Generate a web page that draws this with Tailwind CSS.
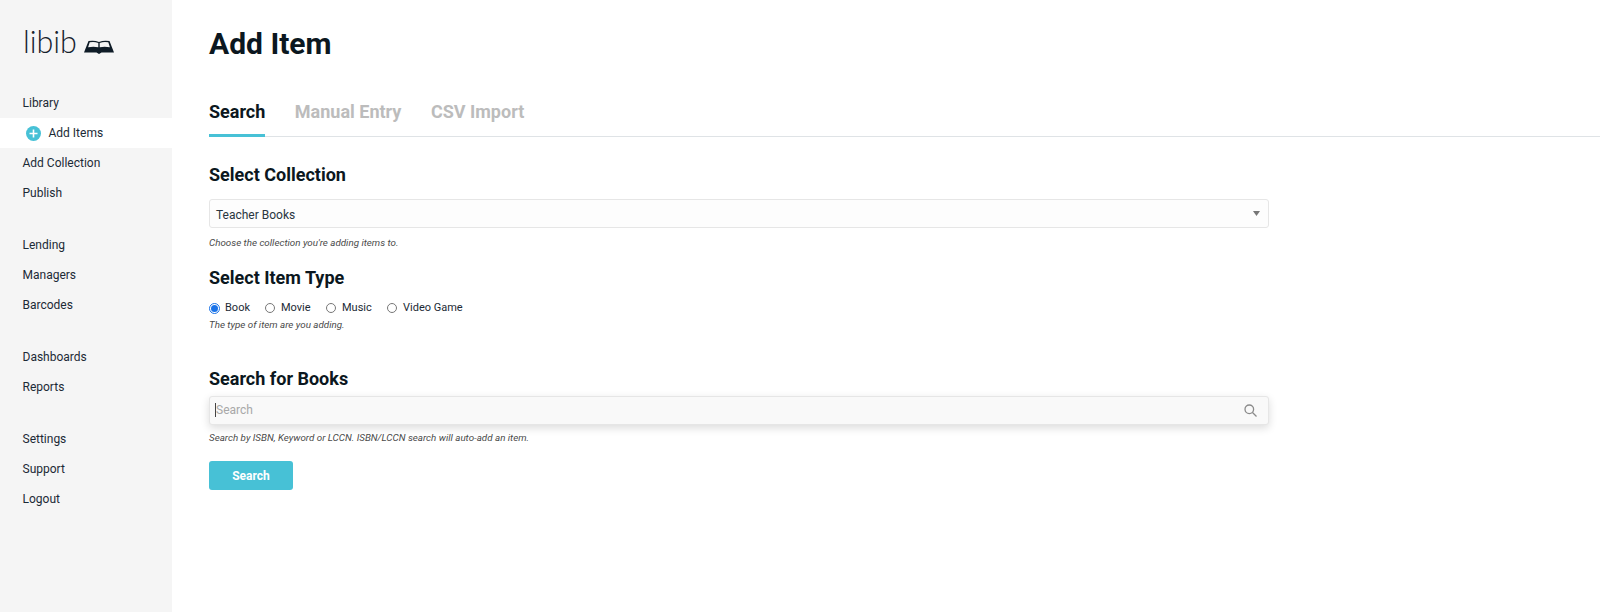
<!DOCTYPE html>
<html>
<head>
<meta charset="utf-8">
<script src="https://cdn.jsdelivr.net/npm/@tailwindcss/browser@4"></script>
</head>
<body class="bg-white font-['Roboto',sans-serif] text-[#0b1720] overflow-hidden">
<div class="flex h-[612px] w-[1600px]">
  <aside class="w-[172px] shrink-0 bg-[#f5f5f5] flex flex-col">
    <div class="flex items-end pl-[23px] pt-[26px] h-[88px] pb-[32px] gap-[6px]">
      <span class="font-['Lato',sans-serif] font-light text-[30.5px] leading-[29px] text-[#15222d]">libib</span>
      <svg class="mb-[2px]" width="32" height="14" viewBox="0 0 31 14"><path d="M0.5 12.5 L5 1 Q11 0 15.5 2 Q20 0 26 1 L30.5 12.5 L18 12.5 L15.5 14 L13 12.5 Z" fill="#0f1c27"/><path d="M6.2 2.3 Q11 1.4 14.8 3 L14.8 7.2 Q10 6.2 4.6 7.2 Z M16.2 3 Q20 1.4 24.8 2.3 L26.4 7.2 Q21 6.2 16.2 7.2 Z" fill="#f5f5f5"/></svg>
    </div>
    <nav class="text-[12px] text-[#1c2a35] leading-[30px]">
      <div class="pl-[22.5px] h-[30px]">Library</div>
      <div class="h-[30px] bg-white flex items-center pl-[26px] gap-[7.5px]">
        <svg width="15" height="15" viewBox="0 0 15 15"><circle cx="7.5" cy="7.5" r="7.5" fill="#47c1d6"/><path d="M7.5 3.5v8M3.5 7.5h8" stroke="#fff" stroke-width="1.6"/></svg>
        <span>Add Items</span>
      </div>
      <div class="pl-[22.5px] h-[30px]">Add Collection</div>
      <div class="pl-[22.5px] h-[30px]">Publish</div>
      <div class="pl-[22.5px] h-[30px] mt-[22px]">Lending</div>
      <div class="pl-[22.5px] h-[30px]">Managers</div>
      <div class="pl-[22.5px] h-[30px]">Barcodes</div>
      <div class="pl-[22.5px] h-[30px] mt-[22px]">Dashboards</div>
      <div class="pl-[22.5px] h-[30px]">Reports</div>
      <div class="pl-[22.5px] h-[30px] mt-[22px]">Settings</div>
      <div class="pl-[22.5px] h-[30px]">Support</div>
      <div class="pl-[22.5px] h-[30px]">Logout</div>
    </nav>
  </aside>
  <main class="flex-1 min-w-0">
    <h1 class="pl-[37px] pt-[26px] text-[30px] font-bold leading-[36px] h-[62px]">Add Item</h1>
    <div class="mt-[30px] ml-[37px] flex gap-[29.5px] border-b border-[#dfe3e6] h-[45px] text-[18px] font-bold">
      <div class="h-[45px] border-b-[3px] border-[#47c1d6] leading-[39px]">Search</div>
      <div class="text-[#bcbcbc] leading-[39px]">Manual Entry</div>
      <div class="text-[#bcbcbc] leading-[39px]">CSV Import</div>
    </div>
    <div class="ml-[37px] w-[1060px]">
      <h2 class="mt-[27px] text-[18px] font-bold leading-[22px]">Select Collection</h2>
      <div class="mt-[13px] h-[29px] rounded-[3px] border border-[#e6e6e6] bg-[#fdfdfd] flex items-center justify-between pl-[6px] pr-[8px] pt-[2px] text-[12px] text-[#2a3640]">
        <span>Teacher Books</span>
        <svg class="mb-[2px]" width="7" height="5" viewBox="0 0 7 5"><path d="M0 0h7L3.5 5z" fill="#777"/></svg>
      </div>
      <p class="mt-[8px] text-[9.8px] italic text-[#4a4a4a] leading-[14px]">Choose the collection you're adding items to.</p>
      <h2 class="mt-[17px] text-[18px] font-bold leading-[22px]">Select Item Type</h2>
      <div class="mt-[11px] flex items-center text-[11px] text-[#1c2a35] leading-[16px]">
        <span class="w-[11px] h-[11px] rounded-full border border-[#1a73e8] flex items-center justify-center"><span class="w-[7px] h-[7px] rounded-full bg-[#1a73e8]"></span></span>
        <span class="ml-[5px] w-[25px]">Book</span>
        <span class="ml-[15px] w-[10px] h-[10px] rounded-full border border-[#777]"></span>
        <span class="ml-[6px] w-[30px]">Movie</span>
        <span class="ml-[15px] w-[10px] h-[10px] rounded-full border border-[#777]"></span>
        <span class="ml-[6px] w-[30px]">Music</span>
        <span class="ml-[15px] w-[10px] h-[10px] rounded-full border border-[#777]"></span>
        <span class="ml-[6px]">Video Game</span>
      </div>
      <p class="mt-[2px] text-[9.8px] italic text-[#4a4a4a] leading-[14px]">The type of item are you adding.</p>
      <h2 class="mt-[36px] text-[18px] font-bold leading-[22px]">Search for Books</h2>
      <div class="mt-[6px] h-[29px] rounded-[3px] border border-[#e6e6e6] bg-[#f9f9f9] shadow-[0_3px_8px_rgba(0,0,0,0.14)] flex items-center justify-between pl-[5px] pr-[11px] pb-[2px] text-[12px] text-[#a8a8a8]">
        <span class="border-l border-[#444] leading-[14px]">Search</span>
        <svg class="mt-[2px]" width="13" height="13" viewBox="0 0 13 13" fill="none" stroke="#8a8a8a" stroke-width="1.3"><circle cx="5.3" cy="5.3" r="4.3"/><path d="M8.5 8.5L12.5 12.5"/></svg>
      </div>
      <p class="mt-[6px] text-[9.8px] italic text-[#4a4a4a] leading-[14px]">Search by ISBN, Keyword or LCCN. ISBN/LCCN search will auto-add an item.</p>
      <button class="mt-[16px] block w-[84px] h-[29px] rounded-[3px] bg-[#47c1d6] text-white text-[12px] font-bold">Search</button>
    </div>
  </main>
</div>
</body>
</html>
